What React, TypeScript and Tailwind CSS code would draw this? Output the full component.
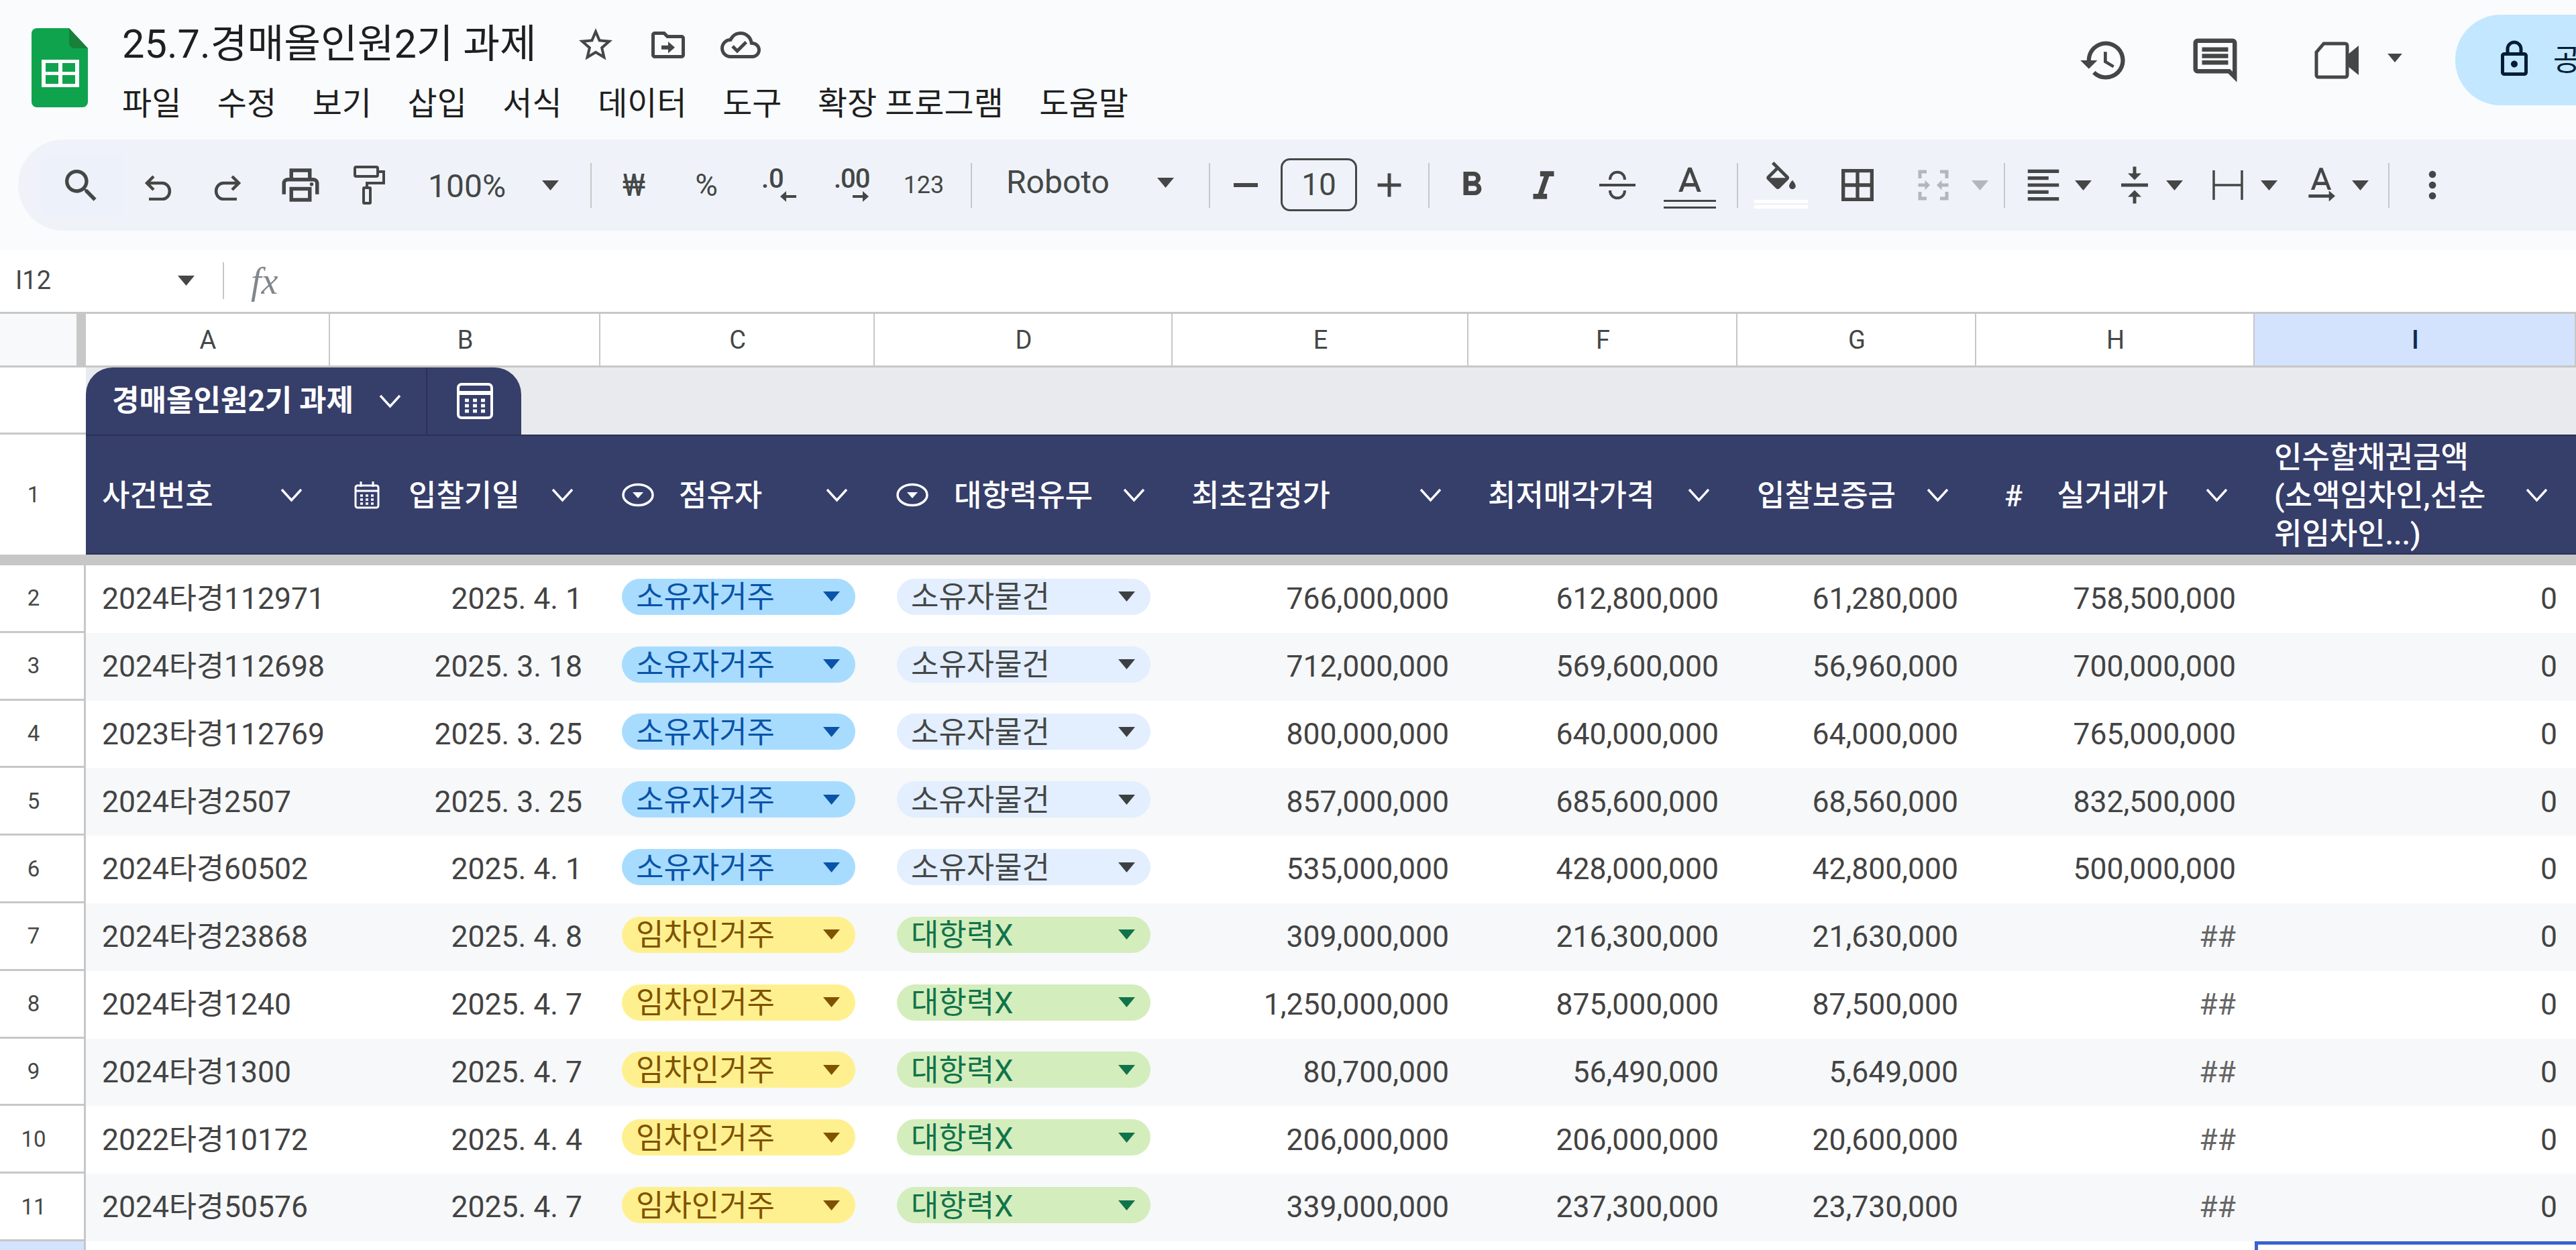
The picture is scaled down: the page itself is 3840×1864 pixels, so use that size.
import React from "react";

type P = { d: string; className?: string };
const Ico = ({ d, className = "w-[60px] h-[60px]" }: P) => (
  <svg viewBox="0 0 24 24" className={`${className} shrink-0`} fill="currentColor" fillRule="evenodd">
    <path d={d} />
  </svg>
);

const Caret = ({ className = "w-[25px] h-[15px] text-[#444746]" }: { className?: string }) => (
  <svg viewBox="0 0 25 15" className={`${className} shrink-0`} fill="currentColor">
    <path d="M0 0h25L12.5 15z" />
  </svg>
);

const Chevron = ({ className = "" }: { className?: string }) => (
  <svg viewBox="0 0 33 22" className={`w-[33px] h-[22px] shrink-0 ${className}`} fill="none" stroke="currentColor" strokeWidth="3.5">
    <path d="M2 3l14.5 16L31 3" />
  </svg>
);

const Sep = ({ className = "" }: { className?: string }) => <div className={`w-[2px] h-[67px] bg-[#c7c7c7] shrink-0 ${className}`} />;

const paths = {
  star: "M22 9.24l-7.19-.62L12 2 9.19 8.63 2 9.24l5.46 4.73L5.82 21 12 17.27 18.18 21l-1.63-7.03L22 9.24zM12 15.4l-3.76 2.27 1-4.28-3.32-2.88 4.38-.38L12 6.1l1.71 4.04 4.38.38-3.32 2.88 1 4.28L12 15.4z",
  folder: "M20 6h-8l-2-2H4c-1.1 0-2 .9-2 2v12c0 1.1.9 2 2 2h16c1.1 0 2-.9 2-2V8c0-1.1-.9-2-2-2zm0 12H4V6h5.17l2 2H20v10zM12 17l4-3.5-4-3.5v2.3H8v2.4h4z",
  cloud: "M19.35 10.04A7.49 7.49 0 0 0 12 4C9.11 4 6.6 5.64 5.35 8.04A5.994 5.994 0 0 0 0 14c0 3.31 2.69 6 6 6h13c2.76 0 5-2.24 5-5 0-2.64-2.05-4.78-4.65-4.96zM19 18H6c-2.21 0-4-1.79-4-4 0-2.05 1.53-3.76 3.56-3.97l1.07-.11.5-.95A5.469 5.469 0 0 1 12 6c2.62 0 4.88 1.86 5.39 4.43l.3 1.5 1.53.11A2.98 2.98 0 0 1 22 15c0 1.65-1.35 3-3 3zm-9-3.82l-2.09-2.09L6.5 13.5 10 17l6.01-6.01-1.41-1.41z",
  history: "M13 3a9 9 0 0 0-9 9H1l3.89 3.89.07.14L9 12H6c0-3.87 3.13-7 7-7s7 3.13 7 7-3.13 7-7 7c-1.93 0-3.68-.79-4.94-2.06l-1.42 1.42A8.954 8.954 0 0 0 13 21a9 9 0 0 0 0-18zm-1 5v5l4.28 2.54.72-1.21-3.5-2.08V8H12z",
  comment: "M20 17.17L18.83 16H4V4h16v13.17zM20 2H4c-1.1 0-2 .9-2 2v12c0 1.1.9 2 2 2h14l4 4V4c0-1.1-.9-2-2-2zM6 12h12v2H6zM6 9h12v2H6zM6 6h12v2H6z",
  lock: "M18 8h-1V6c0-2.76-2.24-5-5-5S7 3.24 7 6v2H6c-1.1 0-2 .9-2 2v10c0 1.1.9 2 2 2h12c1.1 0 2-.9 2-2V10c0-1.1-.9-2-2-2zM9 6c0-1.66 1.34-3 3-3s3 1.34 3 3v2H9V6zm9 14H6V10h12v10zm-6-3c1.1 0 2-.9 2-2s-.9-2-2-2-2 .9-2 2 .9 2 2 2z",
  search: "M15.5 14h-.79l-.28-.27A6.471 6.471 0 0 0 16 9.5 6.5 6.5 0 1 0 9.5 16c1.61 0 3.09-.59 4.23-1.57l.27.28v.79l5 4.99L20.49 19l-4.99-5zm-6 0C7.01 14 5 11.99 5 9.5S7.01 5 9.5 5 14 7.01 14 9.5 11.99 14 9.5 14z",
  print: "M19 8h-1V3H6v5H5c-1.66 0-3 1.34-3 3v6h4v4h12v-4h4v-6c0-1.66-1.34-3-3-3zM8 5h8v3H8V5zm8 14H8v-4h8v4zm2-2v-4H6v4H4v-6c0-.55.45-1 1-1h14c.55 0 1 .45 1 1v6h-2zm0-6.5a1 1 0 1 0 0 2 1 1 0 0 0 0-2z",
  bold: "M15.6 10.79c.97-.67 1.65-1.77 1.65-2.79 0-2.26-1.75-4-4-4H7v14h7.04c2.09 0 3.71-1.7 3.71-3.79 0-1.52-.86-2.82-2.15-3.42zM10 6.5h3c.83 0 1.5.67 1.5 1.5s-.67 1.5-1.5 1.5h-3v-3zm3.5 9H10v-3h3.5c.83 0 1.5.67 1.5 1.5s-.67 1.5-1.5 1.5z",
  italic: "M10 4v3h2.21l-3.42 10H6v3h8v-3h-2.21l3.42-10H18V4z",
  textA: "M11 3L5.5 17h2.25l1.12-3h6.25l1.12 3h2.25L13 3h-2zm-1.38 9L12 5.67 14.38 12H9.62z",
  fill: "M16.56 8.94L7.62 0 6.21 1.41l2.38 2.38-5.15 5.15c-.59.59-.59 1.54 0 2.12l5.5 5.5c.29.29.68.44 1.06.44s.77-.15 1.06-.44l5.5-5.5c.59-.58.59-1.53 0-2.12zM5.21 10L10 5.21 14.79 10H5.21zM19 11.5s-2 2.17-2 3.5c0 1.1.9 2 2 2s2-.9 2-2c0-1.33-2-3.5-2-3.5z",
  borders: "M3 3v18h18V3H3zm8 16H5v-6h6v6zm0-8H5V5h6v6zm8 8h-6v-6h6v6zm0-8h-6V5h6v6z",
  merge: "M3 3h5v2H5v3H3V3zm13 0h5v5h-2V5h-3V3zM3 16h2v3h3v2H3v-5zm16 0h2v5h-5v-2h3v-3zM3 11h4V9l3 3-3 3v-2H3v-2zm18 0v2h-4v2l-3-3 3-3v2h4z",
  align: "M3 3h18v2H3V3zm0 4h12v2H3V7zm0 4h18v2H3v-2zm0 4h12v2H3v-2zm0 4h18v2H3v-2z",
  valign: "M8 19h3v4h2v-4h3l-4-4-4 4zm8-14h-3V1h-2v4H8l4 4 4-4zM4 11v2h16v-2H4z",
  rotate: "M11 1L5.5 15h2.25l1.12-3h6.25l1.12 3h2.25L13 1h-2zM9.62 10L12 3.67 14.38 10H9.62zM4 18h13v-2.5l4 3.5-4 3.5V20H4v-2z",
  more: "M12 8a2 2 0 1 0 0-4 2 2 0 0 0 0 4zm0 2a2 2 0 1 0 0 4 2 2 0 0 0 0-4zm0 6a2 2 0 1 0 0 4 2 2 0 0 0 0-4z",
};

const ToolBtn = ({ w, children }: { w: string; children: React.ReactNode }) => (
  <div className={`${w} h-full flex items-center justify-center shrink-0`}>{children}</div>
);

const Logo = () => (
  <svg viewBox="0 0 84 118" className="w-[84px] h-[118px] shrink-0">
    <path d="M8 0h48l28 30v80a8 8 0 0 1-8 8H8a8 8 0 0 1-8-8V8a8 8 0 0 1 8-8z" fill="#0fa34d" />
    <path d="M56 0l28 30H64a8 8 0 0 1-8-8z" fill="#188038" />
    <path d="M15 47h56v41H15z" fill="#fff" />
    <path d="M21 52h19v13H21zM46 52h19v13H46zM21 70h19v13H21zM46 70h19v13H46z" fill="#0fa34d" />
  </svg>
);

const GridIcon = ({ className }: { className: string }) => (
  <svg viewBox="0 0 40 42" className={`${className} shrink-0`} fill="none" stroke="currentColor" strokeWidth="3">
    <rect x="3" y="7" width="34" height="33" rx="3" />
    <path d="M11 1v8M29 1v8M3 15h34" />
    <path d="M10 22h4M18 22h4M26 22h4M10 28h4M18 28h4M26 28h4M10 34h4M18 34h4M26 34h4" strokeWidth="3.5" />
  </svg>
);

const DropIcon = () => (
  <svg viewBox="0 0 48 36" className="w-[48px] h-[36px] shrink-0" fill="none" stroke="currentColor" strokeWidth="3.5">
    <ellipse cx="24" cy="18" rx="22" ry="15.5" />
    <path d="M16 14h16l-8 9z" fill="currentColor" stroke="none" />
  </svg>
);

type Row = {
  n: number;
  id: string;
  date: string;
  kind: "own" | "rent";
  e: string;
  f: string;
  g: string;
  h: string;
};

const rows: Row[] = [
  { n: 2, id: "2024타경112971", date: "2025. 4. 1", kind: "own", e: "766,000,000", f: "612,800,000", g: "61,280,000", h: "758,500,000" },
  { n: 3, id: "2024타경112698", date: "2025. 3. 18", kind: "own", e: "712,000,000", f: "569,600,000", g: "56,960,000", h: "700,000,000" },
  { n: 4, id: "2023타경112769", date: "2025. 3. 25", kind: "own", e: "800,000,000", f: "640,000,000", g: "64,000,000", h: "765,000,000" },
  { n: 5, id: "2024타경2507", date: "2025. 3. 25", kind: "own", e: "857,000,000", f: "685,600,000", g: "68,560,000", h: "832,500,000" },
  { n: 6, id: "2024타경60502", date: "2025. 4. 1", kind: "own", e: "535,000,000", f: "428,000,000", g: "42,800,000", h: "500,000,000" },
  { n: 7, id: "2024타경23868", date: "2025. 4. 8", kind: "rent", e: "309,000,000", f: "216,300,000", g: "21,630,000", h: "##" },
  { n: 8, id: "2024타경1240", date: "2025. 4. 7", kind: "rent", e: "1,250,000,000", f: "875,000,000", g: "87,500,000", h: "##" },
  { n: 9, id: "2024타경1300", date: "2025. 4. 7", kind: "rent", e: "80,700,000", f: "56,490,000", g: "5,649,000", h: "##" },
  { n: 10, id: "2022타경10172", date: "2025. 4. 4", kind: "rent", e: "206,000,000", f: "206,000,000", g: "20,600,000", h: "##" },
  { n: 11, id: "2024타경50576", date: "2025. 4. 7", kind: "rent", e: "339,000,000", f: "237,300,000", g: "23,730,000", h: "##" },
];

const cols = "grid grid-cols-[128px_364px_403px_409px_444px_441px_401px_356px_415px_479px]";
const letters = ["A", "B", "C", "D", "E", "F", "G", "H", "I"];

const Num = ({ children, className = "pr-[30px]" }: { children: React.ReactNode; className?: string }) => (
  <div className={`flex items-center justify-end ${className}`}>{children}</div>
);

const Chip = ({ label, wrap, bg, text, caret }: { label: string; wrap: string; bg: string; text: string; caret: string }) => (
  <div className={`flex items-center ${wrap}`}>
    <div className={`flex items-center justify-between w-full h-[54px] rounded-full mb-[7px] pl-[21px] pr-[23px] leading-none text-[45px] ${bg} ${text}`}>
      <span className="pt-[2px]">{label}</span>
      <Caret className={`w-[25px] h-[15px] ${caret}`} />
    </div>
  </div>
);

export default function App() {
  return (
    <div className="w-[3840px] h-[1864px] overflow-hidden bg-white text-[44.5px] text-[#434343] [font-family:Roboto,'Noto_Sans_CJK_KR',sans-serif]">
      {/* Title + menu */}
      <div className="h-[372px] bg-[#f9fbfd] flex flex-col">
        <div className="h-[208px] flex">
          <div className="flex-1 flex pl-[47px] pt-[42px]">
            <Logo />
            <div className="ml-[51px] flex flex-col -mt-[3px]">
              <div className="h-[56px] flex items-center text-[#1f1f1f]">
                <span className="text-[59.5px] leading-none w-[626px] whitespace-nowrap">25.7.경매올인원2기 과제</span>
                <div className="flex items-center gap-[48px] ml-[50px] text-[#444746]">
                  <Ico d={paths.star} />
                  <Ico d={paths.folder} />
                  <Ico d={paths.cloud} />
                </div>
              </div>
              <div className="mt-[36px] flex items-center gap-[53.5px] text-[48px] leading-none text-[#1f1f1f] whitespace-nowrap">
                <span>파일</span>
                <span>수정</span>
                <span>보기</span>
                <span>삽입</span>
                <span>서식</span>
                <span>데이터</span>
                <span>도구</span>
                <span>확장 프로그램</span>
                <span>도움말</span>
              </div>
            </div>
          </div>
          <div className="w-[742px] shrink-0 pt-[22px]">
            <div className="h-[135px] flex items-center text-[#444746]">
              <div className="w-[76px] ml-0 flex justify-center">
                <Ico d={paths.history} className="w-[76px] h-[76px]" />
              </div>
              <Ico d={paths.comment} className="w-[78px] h-[78px] ml-[89px]" />
              <svg viewBox="0 0 68 56" className="w-[68px] h-[56px] ml-[109px] shrink-0" fill="none" stroke="currentColor" strokeWidth="5">
                <path d="M14 3h32a3 3 0 0 1 3 3v44a3 3 0 0 1-3 3H6a3 3 0 0 1-3-3V16z" />
                <path d="M49 20l17-14v44L49 36z" fill="currentColor" stroke="none" />
              </svg>
              <Caret className="w-[22px] h-[13px] ml-[41px] -mt-[6px] text-[#444746]" />
              <div className="ml-[79px] w-[300px] h-[135px] rounded-l-full bg-[#c2e7ff] flex items-center pl-[58px] text-[#001d35]">
                <Ico d={paths.lock} className="w-[60px] h-[60px] -mt-[4px]" />
                <span className="ml-[28px] text-[44px] whitespace-nowrap">공유</span>
              </div>
            </div>
          </div>
        </div>
        {/* Toolbar */}
        <div className="ml-[27px] h-[136px] bg-[#eff3f9] rounded-l-[68px] flex items-center pl-[31px] text-[#444746]">
          <div className="w-[126px] h-[93px] bg-[#edf2fa] rounded-l-[20px] flex items-center justify-center shrink-0 pt-[2px]">
            <Ico d={paths.search} className="w-[64px] h-[64px]" />
          </div>
          <ToolBtn w="w-[102px]">
            <svg viewBox="0 0 42 38" className="w-[42px] h-[38px] mt-[8px]" fill="none" stroke="currentColor" strokeWidth="4.5">
              <path d="M15 2L5 12l10 10M5 12h23a10 11 0 0 1 0 24H8" />
            </svg>
          </ToolBtn>
          <ToolBtn w="w-[108px]">
            <svg viewBox="0 0 42 38" className="w-[42px] h-[38px] mt-[8px]" fill="none" stroke="currentColor" strokeWidth="4.5">
              <path d="M27 2l10 10-10 10M37 12H14a10 11 0 0 0 0 24h20" />
            </svg>
          </ToolBtn>
          <ToolBtn w="w-[108px]">
            <Ico d={paths.print} className="w-[66px] h-[66px]" />
          </ToolBtn>
          <ToolBtn w="w-[98px]">
            <svg viewBox="0 0 48 58" className="w-[48px] h-[58px]" fill="none" stroke="currentColor" strokeWidth="4">
              <rect x="2" y="2" width="34" height="14" rx="2" />
              <path d="M36 9h9v17H20v7" />
              <rect x="15" y="33" width="10" height="23" rx="1" />
            </svg>
          </ToolBtn>
          <div className="w-[280px] h-full flex items-center pl-[38px] shrink-0">
            <span className="text-[48px] leading-none w-[170px] mt-[3px]">100%</span>
            <Caret />
          </div>
          <Sep />
          <ToolBtn w="w-[126px]">
            <span className="text-[46px] leading-none">₩</span>
          </ToolBtn>
          <ToolBtn w="w-[90px]">
            <span className="text-[46px] leading-none">%</span>
          </ToolBtn>
          <ToolBtn w="w-[126px]">
            <div className="w-[52px] flex flex-col">
              <span className="text-[40px] leading-[32px] font-medium self-start">.0</span>
              <svg viewBox="0 0 24 16" className="w-[24px] h-[16px] mt-[2px] self-end" fill="currentColor">
                <path d="M0 8l9-8v6h15v4H9v6z" />
              </svg>
            </div>
          </ToolBtn>
          <ToolBtn w="w-[90px]">
            <div className="w-[52px] flex flex-col">
              <span className="text-[40px] leading-[32px] font-medium self-start tracking-[-1px]">.00</span>
              <svg viewBox="0 0 24 16" className="w-[24px] h-[16px] mt-[2px] self-end" fill="currentColor">
                <path d="M24 8l-9-8v6H0v4h15v6z" />
              </svg>
            </div>
          </ToolBtn>
          <ToolBtn w="w-[126px]">
            <span className="text-[36px] leading-none">123</span>
          </ToolBtn>
          <Sep className="ml-[7px]" />
          <div className="w-[353px] h-full flex items-center pl-[51px] shrink-0">
            <span className="text-[48px] leading-none w-[225px] -mt-[8px]">Roboto</span>
            <Caret className="w-[25px] h-[15px] -mt-[8px]" />
          </div>
          <Sep />
          <ToolBtn w="w-[105px]">
            <div className="w-[36px] h-[6px] bg-[#444746]" />
          </ToolBtn>
          <div className="w-[114px] h-[79px] border-[3px] border-[#444746] rounded-[14px] flex items-center justify-center text-[46px] shrink-0 -mt-[1px]">10</div>
          <ToolBtn w="w-[96px]">
            <Ico d="M19 13h-6v6h-2v-6H5v-2h6V5h2v6h6v2z" className="w-[60px] h-[60px]" />
          </ToolBtn>
          <Sep className="ml-[10px]" />
          <ToolBtn w="w-[126px]">
            <Ico d={paths.bold} />
          </ToolBtn>
          <ToolBtn w="w-[88px]">
            <Ico d={paths.italic} className="w-[62px] h-[62px]" />
          </ToolBtn>
          <ToolBtn w="w-[132px]">
            <svg viewBox="0 0 54 44" className="w-[54px] h-[44px]" fill="none" stroke="currentColor" strokeWidth="4">
              <path d="M16 14c0-15 22-15 22 0" />
              <path d="M0 22h54" />
              <path d="M16 30c0 15 22 15 22 0" />
            </svg>
          </ToolBtn>
          <div className="w-[84px] h-full flex flex-col items-center justify-center shrink-0">
            <Ico d={paths.textA} className="w-[62px] h-[62px] -mb-[6px]" />
            <div className="w-[78px] h-[13px] border-y-[3px] border-[#444746]" />
          </div>
          <Sep className="ml-[28px]" />
          <div className="w-[128px] h-full flex flex-col items-center justify-center shrink-0">
            <Ico d={paths.fill} className="w-[58px] h-[58px] -mb-[1px]" />
            <div className="w-[80px] h-[13px] bg-white flex items-center">
              <div className="w-full h-[3px] bg-[#eff3f9]" />
            </div>
          </div>
          <ToolBtn w="w-[100px]">
            <Ico d={paths.borders} className="w-[64px] h-[64px]" />
          </ToolBtn>
          <div className="w-[168px] h-full flex items-center pl-[33px] gap-[27px] shrink-0 text-[#b4b7ba]">
            <Ico d={paths.merge} />
            <Caret className="w-[25px] h-[15px]" />
          </div>
          <Sep />
          <div className="h-full flex items-center pl-[26px] gap-[16px] shrink-0">
            <Ico d={paths.align} className="w-[62px] h-[62px]" />
            <Caret />
          </div>
          <div className="h-full flex items-center pl-[34px] gap-[17px] shrink-0">
            <Ico d={paths.valign} />
            <Caret />
          </div>
          <div className="h-full flex items-center pl-[44px] gap-[26px] shrink-0">
            <svg viewBox="0 0 46 44" className="w-[46px] h-[44px] shrink-0" fill="none" stroke="currentColor" strokeWidth="3.5">
              <path d="M2 0v44M44 0v44M2 22h42" />
            </svg>
            <Caret />
          </div>
          <div className="h-full flex items-center pl-[37px] gap-[18px] shrink-0">
            <Ico d={paths.rotate} className="w-[56px] h-[56px]" />
            <Caret />
          </div>
          <Sep className="ml-[29px]" />
          <Ico d={paths.more} className="w-[64px] h-[64px] ml-[32px]" />
        </div>
      </div>

      {/* Formula bar */}
      <div className="h-[93px] bg-white flex items-center text-[#444746]">
        <span className="text-[38px] leading-none pl-[23px] w-[265px] -mt-[2px]">I12</span>
        <Caret />
        <div className="w-[2px] h-[55px] bg-[#c7c7c7] ml-[42px]" />
        <span className="ml-[40px] text-[56px] leading-none italic text-[#80868b] [font-family:'Liberation_Serif',serif]">fx</span>
      </div>

      {/* Column header */}
      <div className={`${cols} h-[83px] border-t-[3px] border-b-[3px] border-[#c7c7c7] text-[38px] text-[#444746] leading-none`}>
        <div className="bg-[#f8f9fa] border-r-[14px] border-[#c7c7c7]" />
        {letters.map((l) => (
          <div key={l} className={`flex items-center justify-center pl-[2px] border-r-2 border-[#c7c7c7] ${l === "I" ? "bg-[#d3e3fd] text-[#0b2a55] font-medium border-r-0" : "bg-white"}`}>
            {l}
          </div>
        ))}
      </div>

      {/* Table tab band */}
      <div className="h-[100px] flex">
        <div className="w-[128px] bg-white border-b-[3px] border-[#c7c7c7]" />
        <div className="flex-1 bg-[#e8eaed] flex">
          <div className="w-[649px] h-full bg-[#363e6a] rounded-t-[40px] flex text-white">
            <div className="w-[509px] flex items-center pl-[39px] border-r-2 border-[#2b3155]">
              <span className="text-[44px] font-bold leading-none whitespace-nowrap w-[398px]">경매올인원2기 과제</span>
              <Chevron />
            </div>
            <div className="flex-1 flex items-center justify-center">
              <svg viewBox="0 0 56 56" className="w-[56px] h-[56px]" fill="none" stroke="currentColor" strokeWidth="4">
                <rect x="4" y="3" width="50" height="50" rx="5" />
                <path d="M4 16h50" strokeWidth="6" />
                <path d="M14 27h6M26 27h6M38 27h6M14 35h6M26 35h6M38 35h6M14 43h6M26 43h6M38 43h6" strokeWidth="5" />
              </svg>
            </div>
          </div>
        </div>
      </div>

      {/* Row 1 */}
      <div className={`${cols} h-[179px] leading-[57px]`}>
        <div className="bg-white flex items-center justify-center pr-[28px] text-[33px] text-[#444746]">1</div>
        <div className="bg-[#363e6a] col-span-9 grid grid-cols-[364px_403px_409px_444px_441px_401px_356px_415px_479px] text-white text-[45px] font-medium border-y-2 border-[#2b3155]">
          <div className="flex items-center pl-[24px] pr-[41px]">
            <span className="pt-[3px]">사건번호</span>
            <Chevron className="ml-auto" />
          </div>
          <div className="flex items-center pl-[35px] pr-[40px]">
            <GridIcon className="w-[40px] h-[42px]" />
            <span className="ml-[42px] pt-[3px]">입찰기일</span>
            <Chevron className="ml-auto" />
          </div>
          <div className="flex items-center pl-[32px] pr-[40px]">
            <DropIcon />
            <span className="ml-[37px] pt-[3px]">점유자</span>
            <Chevron className="ml-auto" />
          </div>
          <div className="flex items-center pl-[32px] pr-[41px]">
            <DropIcon />
            <span className="ml-[38px] pt-[3px]">대항력유무</span>
            <Chevron className="ml-auto" />
          </div>
          <div className="flex items-center pl-[28px] pr-[40px]">
            <span className="pt-[3px]">최초감정가</span>
            <Chevron className="ml-auto" />
          </div>
          <div className="flex items-center pl-[29px] pr-[41px]">
            <span className="pt-[3px]">최저매각가격</span>
            <Chevron className="ml-auto" />
          </div>
          <div className="flex items-center pl-[29px] pr-[41px]">
            <span className="pt-[3px]">입찰보증금</span>
            <Chevron className="ml-auto" />
          </div>
          <div className="flex items-center pl-[42px] pr-[40px]">
            <span className="pt-[3px]">#</span>
            <span className="ml-[51px] pt-[3px]">실거래가</span>
            <Chevron className="ml-auto" />
          </div>
          <div className="flex items-center pl-[29px] pr-[42px]">
            <span className="whitespace-nowrap pt-[3px]">
              인수할채권금액
              <br />
              (소액임차인,선순
              <br />
              위임차인...)
            </span>
            <Chevron className="ml-auto" />
          </div>
        </div>
      </div>
      <div className="h-[16px] bg-[#c7c7c7]" />

      {/* Data */}
      {rows.map((r) => (
        <div key={r.n} className={`${cols} h-[100.8px] leading-none ${r.n % 2 ? "bg-[#f6f8f9]" : "bg-white"}`}>
          <div className="bg-white flex items-center justify-center pr-[25px] text-[33px] text-[#444746] border-r-[3px] border-b-[3px] border-[#c7c7c7]">{r.n}</div>
          <div className="flex items-center pl-[24px] whitespace-nowrap">{r.id}</div>
          <Num className="pr-[27px]">{r.date}</Num>
          {r.kind === "own" ? (
            <Chip label="소유자거주" wrap="pl-[32px] pr-[29px]" bg="bg-[#a8dcff]" text="text-[#0a53a8]" caret="text-[#0a53a8]" />
          ) : (
            <Chip label="임차인거주" wrap="pl-[32px] pr-[29px]" bg="bg-[#fff08f]" text="text-[#7f5200]" caret="text-[#7f5200]" />
          )}
          {r.kind === "own" ? (
            <Chip label="소유자물건" wrap="pl-[33px] pr-[33px]" bg="bg-[#e3eefe]" text="text-[#444746]" caret="text-[#3c4043]" />
          ) : (
            <Chip label="대항력X" wrap="pl-[33px] pr-[33px]" bg="bg-[#d4edbc]" text="text-[#11734b]" caret="text-[#11734b]" />
          )}
          <Num className="pr-[29px]">{r.e}</Num>
          <Num className="pr-[28px]">{r.f}</Num>
          <Num className="pr-[27px]">{r.g}</Num>
          <Num className="pr-[28px]">{r.h === "##" ? <span className="text-[#666]">##</span> : r.h}</Num>
          <Num className="pr-[28px]">{"0"}</Num>
        </div>
      ))}

      {/* Row 12 */}
      <div className={`${cols} h-[14px]`}>
        <div className="bg-[#d3e3fd] border-r-[3px] border-[#c7c7c7]" />
        <div className="col-span-8 bg-white" />
        <div className="border-t-[5px] border-l-[5px] border-[#3b62d0] bg-white" />
      </div>
    </div>
  );
}
